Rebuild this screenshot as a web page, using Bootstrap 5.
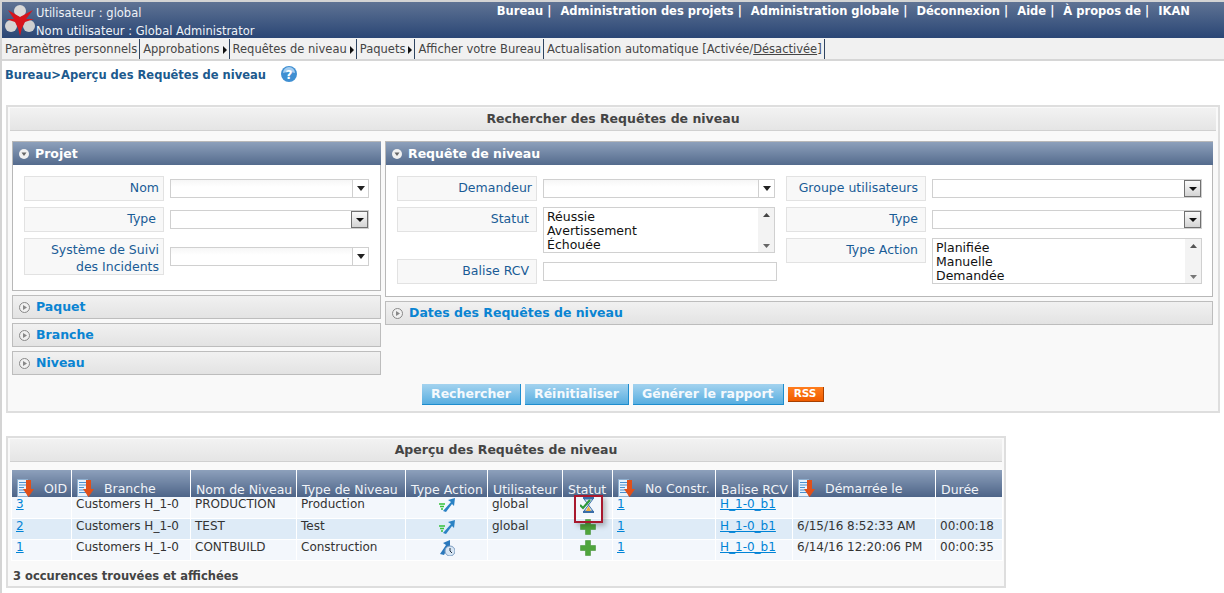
<!DOCTYPE html>
<html lang="fr">
<head>
<meta charset="UTF-8">
<title>Aperçu des Requêtes de niveau</title>
<link rel="stylesheet" href="https://cdn.jsdelivr.net/npm/bootstrap@5.3.3/dist/css/bootstrap.min.css">
<style>
html, body { height: 100%; overflow: hidden; }
body { font-family: "DejaVu Sans", Verdana, sans-serif; font-size: 12px; line-height: 14px; color: #333; background: #fff; border-left: 2px solid #d4d4d4; border-top: 2px solid #d4d4d4; }
a { color: #0083d6; }

.top-bar { height: 36px; background: linear-gradient(#5f7394, #2a4675); color: #fff; font-size: 11.5px; }
.top-logo { width: 34px; height: 36px; }
.top-user { padding-top: 2px; line-height: 18px; color: #eef2f7; }
.top-links { padding: 2px 34px 0 0; font-weight: 700; font-size: 11.5px; line-height: 14px; }
.top-links span { margin-left: 9px; }
.menu-bar { height: 23px; background: #f1f1f1; border-bottom: 2px solid #d6d6d6; color: #454545; font-size: 11.5px; line-height: 20px; }
.menu-item { height: 20px; margin-top: 1px; padding: 0 2px 0 3px; border-right: 1px solid #2e4460; white-space: nowrap; }
.menu-item svg { margin-left: 3px; }
.crumb { height: 44px; padding: 7px 0 0 3px; color: #1c5a8e; font-weight: 700; font-size: 11.5px; }
.crumb svg { margin-left: 15px; margin-top: -3px; }

.box { margin-left: 4px; border: 2px solid #dedede; background: #f9f9f9; }
.box-search { width: 1214px; height: 308px; }
.box-title { margin: 1px 2px 0; height: 23px; background: linear-gradient(#f2f2f2, #e5e5e5); border-bottom: 1px solid #d0d0d0; text-align: center; font-weight: 700; font-size: 12.5px; line-height: 22px; color: #444; }
.col-left { width: 369px; margin-left: 4px; }
.col-right { width: 828px; margin-left: 4px; }
.search-cols { padding-top: 10px; }

.panel-open { border: 1px solid #b8b8b8; background: #fff; }
.panel-head { height: 23px; background: linear-gradient(#8da0bb, #546b8d); color: #fff; font-weight: 700; font-size: 12.5px; line-height: 22px; padding-left: 6px; gap: 6px; margin: 0 -1px 0 0; }
.panel-closed { height: 24px; border: 1px solid #bdbdbd; background: linear-gradient(#f1f1f1, #e3e3e3); color: #0a84d2; font-weight: 700; font-size: 12.5px; line-height: 22px; padding-left: 6px; gap: 6px; margin-top: 4px; }
.panel-body-left { height: 125px; padding: 11px 11px 0; }
.panel-body-right { height: 131px; padding: 11px 11px 0; gap: 9px; }

.field { gap: 6px; margin-bottom: 6px; }
.field-label { flex: none; width: 140px; height: 25px; background: #f8f8f8; border: 1px solid #e2e2e2; color: #1a5c96; text-align: right; padding: 4px 4px 0 0; font-size: 12.5px; }
.field-label.pad-more { padding-right: 7px; }
.field-label.tall { height: 37px; padding-top: 4px; line-height: 17px; padding-top: 2px; }
.combo { height: 19px; border: 1px solid #d0d0d0; background: linear-gradient(#f6f6f6, #fff 40%); }
.combo-flat-arrow { width: 16px; border-left: 1px solid #d0d0d0; background: #fff; }
.combo-btn { width: 17px; border: 1px solid #707070; background: linear-gradient(#fafafa, #d4d4d4); }
.combo.plain { background: #fff; }
.w-a { width: 199px; }
.w-b { width: 232px; }
.w-c { width: 270px; }
.text-box { width: 234px; height: 19px; border: 1px solid #d0d0d0; background: #fff; }
.list-box { height: 46px; border: 1px solid #d0d0d0; background: #fff; color: #111; font-size: 12.5px; line-height: 14px; padding: 2px 0 0 3px; }
.list-scroll { width: 16px; margin: -2px 0 0; background: #f3f3f3; padding: 5px 0 4px; }
.mt-stat { margin-top: 3px; }

.action-row { padding-top: 9px; gap: 4px; padding-left: 414px; }
.act-btn { height: 21px; padding: 0 9px; background: linear-gradient(#a4d3ef, #58aee0); border: 0; border-right: 1px solid #1d8ccd; border-bottom: 1px solid #1d8ccd; border-radius: 0; color: #f4f9fd; font-weight: 700; font-size: 12.5px; line-height: 20px; }
.rss-tag { height: 15px; width: 36px; margin-top: 3px; background: linear-gradient(#ff7d1e, #f05c00); border-right: 1px solid #a84000; border-bottom: 1px solid #a84000; color: #fff; font-weight: 700; font-size: 10.5px; line-height: 13px; text-align: center; }

.box-result { width: 1000px; height: 152px; margin-top: 23px; }
.res-wrap { padding: 8px 3px 0 3px; }
table.res-tbl { table-layout: fixed; width: 991px; margin: 0; border-collapse: collapse; border-bottom: 1px solid #d6d6d6; font-size: 12px; }
table.res-tbl > thead > tr > th { height: 27px; padding: 0 0 0 5px; background: linear-gradient(#8da0bb, #4d6488); color: #f1f4f8; font-weight: 400; border: 1px solid #fff; border-top: 0; border-bottom: 0; font-size: 12.5px; white-space: nowrap; box-shadow: none; }
table.res-tbl > tbody > tr > td { height: 21px; padding: 0 0 0 4px; border: 1px solid #fff; border-top: 0; border-bottom-color: #fff; color: #333; white-space: nowrap; box-shadow: none; background: #f3f7fc; }
table.res-tbl > tbody > tr.row-alt > td { background: #deebf7; }
table.res-tbl svg { vertical-align: middle; }
.cell-icon { text-align: center; padding-left: 0 !important; }
.sort-gap { margin: -2px 10px 0 0; }
.status-cell { position: relative; }
.status-mark { position: absolute; left: 11px; top: -2px; width: 29px; height: 28px; border: 2px solid #a8192e; box-shadow: 3px 3px 5px rgba(0, 0, 0, .25); z-index: 2; }
.res-foot { padding: 8px 0 0 2px; font-weight: 700; font-size: 11.5px; color: #444; }
</style>
</head>
<body>

<header class="top-bar d-flex justify-content-between">
    <div class="d-flex">
        <svg class="top-logo" viewBox="0 0 34 36">
            <circle cx="18" cy="9" r="6" fill="#d8d8d8"/>
            <circle cx="9" cy="24" r="6" fill="#d4d4d4"/>
            <circle cx="27" cy="24" r="6" fill="#cfcfcf"/>
            <path d="M18 15 L31 8 L24 17 L32 17 L23 20 L20 26 L18 34 L16 26 L13 20 L4 17 L12 17 L6 8 Z" fill="#d8141c"/>
        </svg>
        <div class="top-user">Utilisateur : global<br>Nom utilisateur : Global Administrator</div>
    </div>
    <div class="top-links"><span>Bureau |</span><span>Administration des projets |</span><span>Administration globale |</span><span>Déconnexion |</span><span>Aide |</span><span>À propos de |</span><span>IKAN</span></div>
</header>

<nav class="menu-bar d-flex">
    <div class="menu-item">Paramètres personnels</div>
    <div class="menu-item">Approbations<svg width="4" height="8"><path d="M0 0 L4 4 L0 8Z" fill="#111"/></svg></div>
    <div class="menu-item">Requêtes de niveau<svg width="4" height="8"><path d="M0 0 L4 4 L0 8Z" fill="#111"/></svg></div>
    <div class="menu-item">Paquets<svg width="4" height="8"><path d="M0 0 L4 4 L0 8Z" fill="#111"/></svg></div>
    <div class="menu-item">Afficher votre Bureau</div>
    <div class="menu-item">Actualisation automatique [Activée/<u>Désactivée</u>]</div>
</nav>

<div class="crumb">Bureau&gt;Aperçu des Requêtes de niveau<svg width="16" height="16" viewBox="0 0 16 16"><circle cx="8" cy="8" r="8" fill="#3f8fd2"/><path d="M2 7 A6 6 0 0 1 14 7 A10 5 0 0 0 2 7Z" fill="#a5cdf0"/><text x="8" y="12.5" text-anchor="middle" font-size="12" font-weight="700" fill="#fff" font-family="DejaVu Sans">?</text></svg></div>

<section class="box box-search">
    <div class="box-title">Rechercher des Requêtes de niveau</div>
    <div class="search-cols d-flex">
        <div class="col-left">
            <div class="panel-open">
                <div class="panel-head d-flex align-items-center"><svg width="10" height="10"><circle cx="5" cy="5" r="5" fill="#f1f1f1"/><path d="M2.5 3.5 H7.5 L5 7Z" fill="#666"/></svg>Projet</div>
                <div class="panel-body-left">
                    <div class="field d-flex align-items-center">
                        <div class="field-label">Nom</div>
                        <div class="combo w-a d-flex justify-content-end"><div class="combo-flat-arrow d-flex align-items-center justify-content-center"><svg width="8" height="5"><path d="M0 0 H8 L4 5Z" fill="#222"/></svg></div></div>
                    </div>
                    <div class="field d-flex align-items-center">
                        <div class="field-label pad-more">Type</div>
                        <div class="combo plain w-a d-flex justify-content-end"><div class="combo-btn d-flex align-items-center justify-content-center"><svg width="8" height="4"><path d="M0 0 H8 L4 4Z" fill="#111"/></svg></div></div>
                    </div>
                    <div class="field d-flex align-items-center">
                        <div class="field-label tall">Système de Suivi des Incidents</div>
                        <div class="combo w-a d-flex justify-content-end"><div class="combo-flat-arrow d-flex align-items-center justify-content-center"><svg width="8" height="5"><path d="M0 0 H8 L4 5Z" fill="#222"/></svg></div></div>
                    </div>
                </div>
            </div>
            <div class="panel-closed d-flex align-items-center"><svg width="11" height="11"><circle cx="5.5" cy="5.5" r="5" fill="#f0f0f0" stroke="#888"/><path d="M4 3 L8 5.5 L4 8Z" fill="#888"/></svg>Paquet</div>
            <div class="panel-closed d-flex align-items-center"><svg width="11" height="11"><circle cx="5.5" cy="5.5" r="5" fill="#f0f0f0" stroke="#888"/><path d="M4 3 L8 5.5 L4 8Z" fill="#888"/></svg>Branche</div>
            <div class="panel-closed d-flex align-items-center"><svg width="11" height="11"><circle cx="5.5" cy="5.5" r="5" fill="#f0f0f0" stroke="#888"/><path d="M4 3 L8 5.5 L4 8Z" fill="#888"/></svg>Niveau</div>
        </div>
        <div class="col-right">
            <div class="panel-open">
                <div class="panel-head d-flex align-items-center"><svg width="10" height="10"><circle cx="5" cy="5" r="5" fill="#f1f1f1"/><path d="M2.5 3.5 H7.5 L5 7Z" fill="#666"/></svg>Requête de niveau</div>
                <div class="panel-body-right d-flex">
                    <div>
                        <div class="field d-flex align-items-center">
                            <div class="field-label">Demandeur</div>
                            <div class="combo w-b d-flex justify-content-end"><div class="combo-flat-arrow d-flex align-items-center justify-content-center"><svg width="8" height="5"><path d="M0 0 H8 L4 5Z" fill="#222"/></svg></div></div>
                        </div>
                        <div class="field d-flex align-items-start">
                            <div class="field-label pad-more">Statut</div>
                            <div class="list-box w-b d-flex justify-content-between">
                                <div>Réussie<br>Avertissement<br>Échouée</div>
                                <div class="list-scroll d-flex flex-column justify-content-between align-items-center"><svg width="7" height="4"><path d="M0 4 L3.5 0 L7 4Z" fill="#444"/></svg><svg width="7" height="4"><path d="M0 0 L3.5 4 L7 0Z" fill="#666"/></svg></div>
                            </div>
                        </div>
                        <div class="field d-flex align-items-start">
                            <div class="field-label pad-more">Balise RCV</div>
                            <div class="text-box mt-stat"></div>
                        </div>
                    </div>
                    <div>
                        <div class="field d-flex align-items-center">
                            <div class="field-label pad-more">Groupe utilisateurs</div>
                            <div class="combo plain w-c d-flex justify-content-end"><div class="combo-btn d-flex align-items-center justify-content-center"><svg width="8" height="4"><path d="M0 0 H8 L4 4Z" fill="#111"/></svg></div></div>
                        </div>
                        <div class="field d-flex align-items-center">
                            <div class="field-label pad-more">Type</div>
                            <div class="combo plain w-c d-flex justify-content-end"><div class="combo-btn d-flex align-items-center justify-content-center"><svg width="8" height="4"><path d="M0 0 H8 L4 4Z" fill="#111"/></svg></div></div>
                        </div>
                        <div class="field d-flex align-items-start">
                            <div class="field-label pad-more">Type Action</div>
                            <div class="list-box w-c d-flex justify-content-between">
                                <div>Planifiée<br>Manuelle<br>Demandée</div>
                                <div class="list-scroll d-flex flex-column justify-content-between align-items-center"><svg width="7" height="4"><path d="M0 4 L3.5 0 L7 4Z" fill="#555"/></svg><svg width="7" height="4"><path d="M0 0 L3.5 4 L7 0Z" fill="#777"/></svg></div>
                            </div>
                        </div>
                    </div>
                </div>
            </div>
            <div class="panel-closed d-flex align-items-center"><svg width="11" height="11"><circle cx="5.5" cy="5.5" r="5" fill="#f0f0f0" stroke="#888"/><path d="M4 3 L8 5.5 L4 8Z" fill="#888"/></svg>Dates des Requêtes de niveau</div>
        </div>
    </div>
    <div class="action-row d-flex">
        <button type="button" class="btn act-btn">Rechercher</button>
        <button type="button" class="btn act-btn">Réinitialiser</button>
        <button type="button" class="btn act-btn">Générer le rapport</button>
        <div class="rss-tag">RSS</div>
    </div>
</section>

<section class="box box-result">
    <div class="box-title">Aperçu des Requêtes de niveau</div>
    <div class="res-wrap">
        <table class="table res-tbl">
            <colgroup>
                <col class="c1"><col class="c2"><col class="c3"><col class="c4"><col class="c5"><col class="c6"><col class="c7"><col class="c8"><col class="c9"><col class="c10"><col class="c11">
            </colgroup>
            <thead>
                <tr>
                    <th><svg class="sort-gap" width="17" height="18" viewBox="0 0 17 18"><use href="#sort-doc"/></svg>OID</th>
                    <th><svg class="sort-gap" width="17" height="18" viewBox="0 0 17 18"><use href="#sort-doc"/></svg>Branche</th>
                    <th>Nom de Niveau</th>
                    <th>Type de Niveau</th>
                    <th>Type Action</th>
                    <th>Utilisateur</th>
                    <th>Statut</th>
                    <th><svg class="sort-gap" width="17" height="18" viewBox="0 0 17 18"><use href="#sort-doc"/></svg>No Constr.</th>
                    <th>Balise RCV</th>
                    <th><svg class="sort-gap" width="17" height="18" viewBox="0 0 17 18"><use href="#sort-doc"/></svg>Démarrée le</th>
                    <th>Durée</th>
                </tr>
            </thead>
            <tbody>
                <tr>
                    <td><a href="#">3</a></td><td>Customers H_1-0</td><td>PRODUCTION</td><td>Production</td>
                    <td class="cell-icon"><svg width="16" height="16"><use href="#act-manual"/></svg></td>
                    <td>global</td>
                    <td class="cell-icon status-cell"><svg width="16" height="16"><use href="#st-wait"/></svg><div class="status-mark"></div></td>
                    <td><a href="#">1</a></td><td><a href="#">H_1-0_b1</a></td><td></td><td></td>
                </tr>
                <tr class="row-alt">
                    <td><a href="#">2</a></td><td>Customers H_1-0</td><td>TEST</td><td>Test</td>
                    <td class="cell-icon"><svg width="16" height="16"><use href="#act-manual"/></svg></td>
                    <td>global</td>
                    <td class="cell-icon"><svg width="16" height="16"><use href="#st-plus"/></svg></td>
                    <td><a href="#">1</a></td><td><a href="#">H_1-0_b1</a></td><td>6/15/16 8:52:33 AM</td><td>00:00:18</td>
                </tr>
                <tr>
                    <td><a href="#">1</a></td><td>Customers H_1-0</td><td>CONTBUILD</td><td>Construction</td>
                    <td class="cell-icon"><svg width="16" height="16"><use href="#act-sched"/></svg></td>
                    <td></td>
                    <td class="cell-icon"><svg width="16" height="16"><use href="#st-plus"/></svg></td>
                    <td><a href="#">1</a></td><td><a href="#">H_1-0_b1</a></td><td>6/14/16 12:20:06 PM</td><td>00:00:35</td>
                </tr>
            </tbody>
        </table>
        <div class="res-foot">3 occurences trouvées et affichées</div>
    </div>
</section>

<svg width="0" height="0" class="d-block">
    <defs>
        <g id="sort-doc">
            <rect x="0.5" y="0.5" width="10" height="17" fill="#e8f2fb" stroke="#8fb0d0"/>
            <path d="M2 3.5 H9 M2 6 H9 M2 8.5 H7 M2 11 H7 M2 13.5 H9" stroke="#4a90d0"/>
            <path d="M9 1 H14 V10 H17 L11.5 18 L6 10 H9Z" fill="#e0501a"/>
        </g>
        <g id="act-manual">
            <path d="M4 14 L12 5 L9 3 L16 1 L15 9 L13 7 L7 15Z" fill="#2a82c4"/>
            <path d="M0 7 H6 M1 9.5 H5 M2 12 H4" stroke="#35c23a" stroke-width="1.5"/>
        </g>
        <g id="act-sched">
            <path d="M1 14 L7 5 L4 3 L11 0 L11 8 L9 7 L5 15Z" fill="#2a78bc"/>
            <circle cx="11" cy="11" r="5" fill="#d8e6f4" stroke="#7a9cc0"/>
            <path d="M11 8 V11 L13 13" stroke="#234" fill="none"/>
        </g>
        <g id="st-plus">
            <path d="M5.5 0.5 H10.5 V5.5 H15.5 V10.5 H10.5 V15.5 H5.5 V10.5 H0.5 V5.5 H5.5Z" fill="#4fa53c" stroke="#3a8a2c" stroke-width="0.5"/>
        </g>
        <g id="st-wait">
            <path d="M3 1 H14 M3 15 H14" stroke="#3a6ea8" stroke-width="2"/>
            <path d="M4 2 L8.5 8 L4 14 H13 L8.5 8 L13 2Z" fill="#dfeaf4" stroke="#3a6ea8"/>
            <path d="M6 14 L8.5 9 L11 14Z" fill="#f0b040"/>
            <path d="M0 8 L3 11 L10 3" stroke="#2e9a3a" stroke-width="2.2" fill="none"/>
        </g>
    </defs>
</svg>
<style>
col.c1 { width: 60px; } col.c2 { width: 119px; } col.c3 { width: 106px; } col.c4 { width: 109px; } col.c5 { width: 82px; } col.c6 { width: 75px; } col.c7 { width: 50px; } col.c8 { width: 103px; } col.c9 { width: 77px; } col.c10 { width: 143px; } col.c11 { width: 67px; }
</style>
</body>
</html>
